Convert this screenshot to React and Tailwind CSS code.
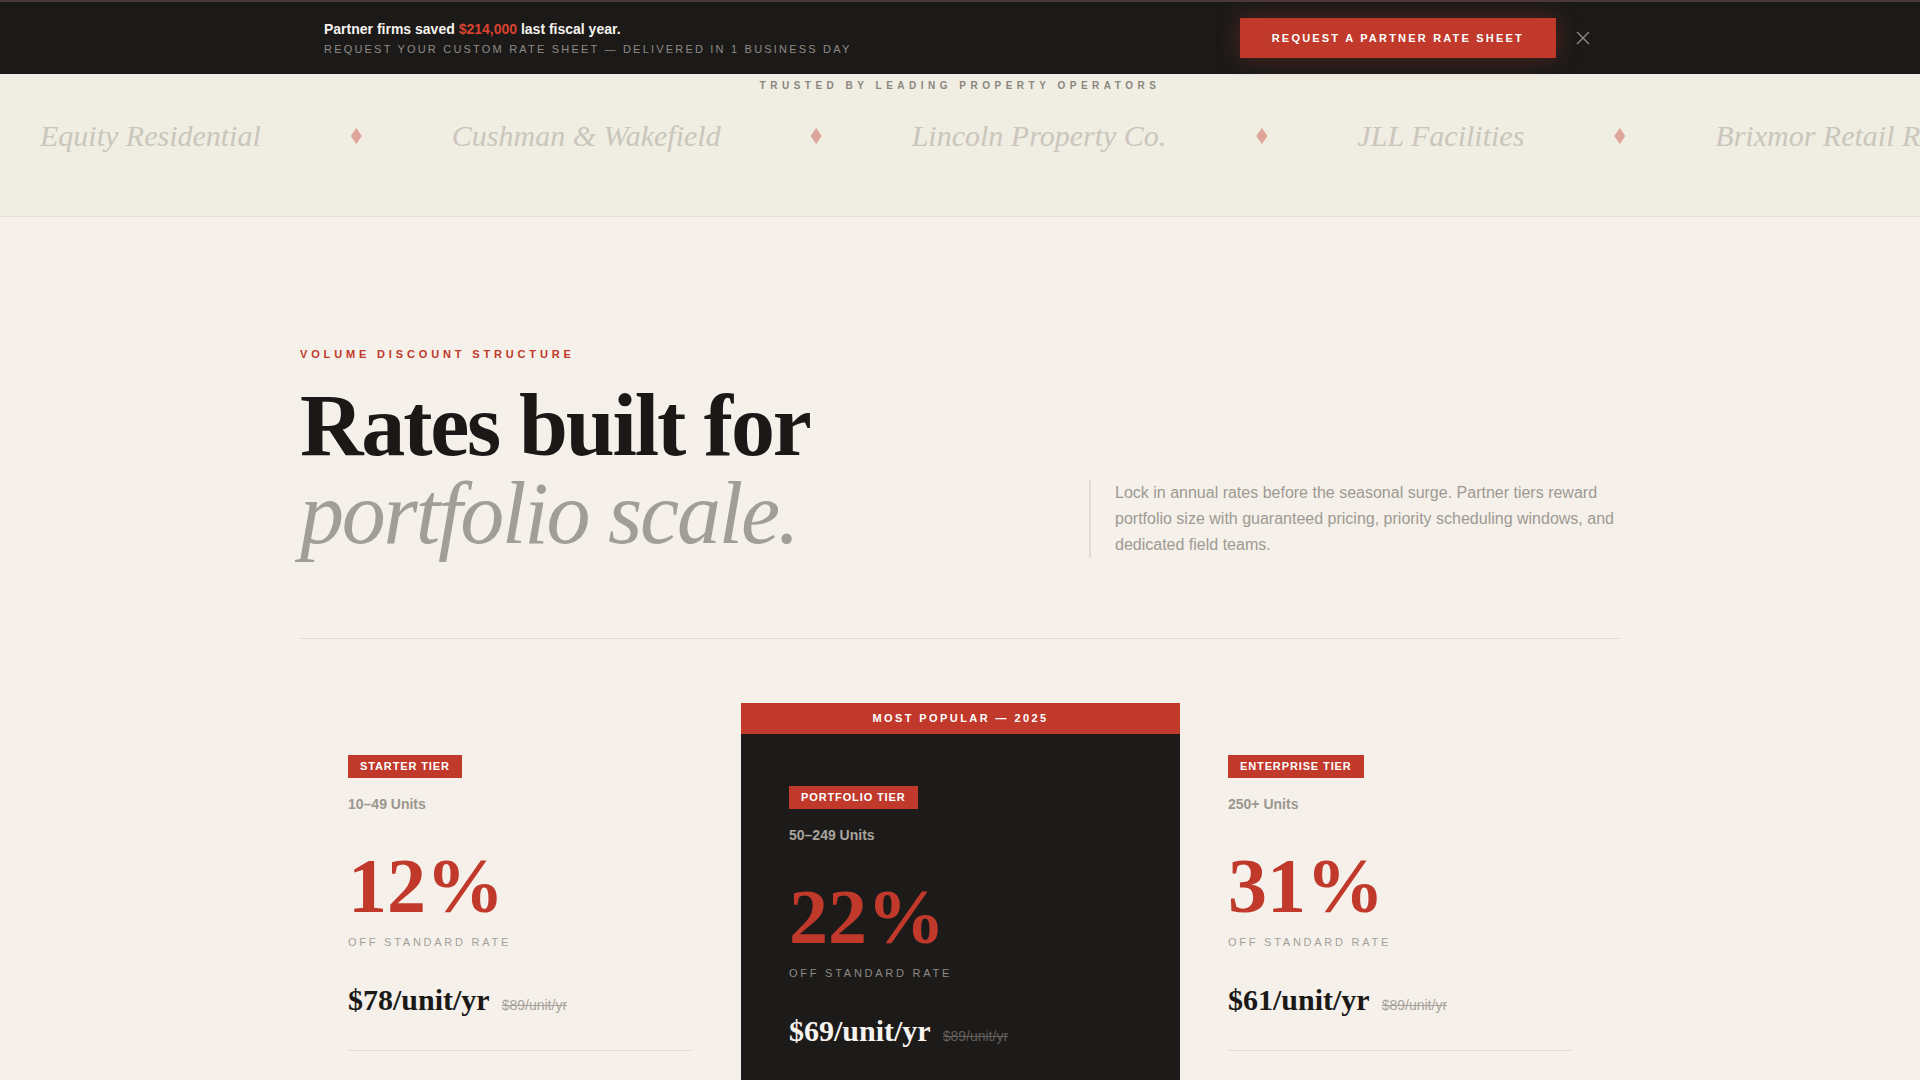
import { useState } from 'react'

const logos = [
  'Equity Residential',
  'Cushman & Wakefield',
  'Lincoln Property Co.',
  'JLL Facilities',
  'Brixmor Retail Realty',
  'Greystar Partners',
]

const tiers = [
  {
    name: 'Starter Tier',
    units: '10–49 Units',
    discount: '12%',
    price: '$78/unit/yr',
    features: ['Locked annual rate', 'Quarterly service visits', 'Standard scheduling'],
  },
  {
    name: 'Portfolio Tier',
    units: '50–249 Units',
    discount: '22%',
    price: '$69/unit/yr',
    featured: true,
    features: ['Guaranteed pricing', 'Priority scheduling windows', 'Dedicated account lead'],
  },
  {
    name: 'Enterprise Tier',
    units: '250+ Units',
    discount: '31%',
    price: '$61/unit/yr',
    features: ['Dedicated field teams', 'Custom SLA terms', 'Consolidated billing'],
  },
]

const CloseIcon = () => (
  <svg width="14" height="14" viewBox="0 0 14 14" fill="none" stroke="currentColor" strokeWidth="1.4">
    <path d="M1 1L13 13M13 1L1 13" />
  </svg>
)

const PromoBar = ({ onClose }) => (
  <div className="bg-[#1b1a19] border-t-2 border-[#4a393c]">
    <div className="max-w-[1320px] mx-auto pl-6 pr-[26px] h-[72px] flex items-center justify-between">
      <div>
        <p className="text-[14px] leading-5 font-bold text-[#f7f3ee]">
          Partner firms saved <span className="text-[#d9432f]">$214,000</span> last fiscal year.
        </p>
        <p className="mt-0.5 text-[11px] leading-4 tracking-[0.2em] uppercase text-[#8f8b85]">
          Request your custom rate sheet — delivered in 1 business day
        </p>
      </div>
      <div className="flex items-center gap-4">
        <button className="bg-[#c0392b] px-8 py-3 text-[11px] leading-4 font-bold tracking-[0.2em] uppercase text-white shadow-[0_0_22px_rgba(192,57,43,0.35)]">
          Request a Partner Rate Sheet
        </button>
        <button onClick={onClose} className="p-1 text-[#8f8b85]" title="Dismiss">
          <CloseIcon />
        </button>
      </div>
    </div>
  </div>
)

const Diamond = () => (
  <span className="w-[11px] h-[16px] shrink-0 bg-[#c0392b]/40 [clip-path:polygon(50%_0,100%_50%,50%_100%,0_50%)]" />
)

const LogoStrip = () => (
  <div className="bg-[#f0ede3] border-b border-[#e6e1d7] pt-[5px] pb-[62px]">
    <p className="text-center text-[10px] leading-[14px] font-semibold tracking-[0.45em] uppercase text-[#8a867f]">
      Trusted by leading property operators
    </p>
    <div className="mt-[25px] overflow-hidden">
      <div className="flex items-center gap-[90px] pl-10 whitespace-nowrap">
        {logos.map((logo, i) => (
          <div key={logo} className="flex items-center gap-[90px] shrink-0">
            {i > 0 && <Diamond />}
            <span className="font-['Liberation_Serif',serif] italic text-[30px] leading-9 text-[#cac6bc]">
              {logo}
            </span>
          </div>
        ))}
      </div>
    </div>
  </div>
)

const TierCard = ({ tier }) => {
  const dark = tier.featured
  return (
    <div className={dark ? 'bg-[#1c1b1a]' : ''}>
      {dark && (
        <div className="h-[31px] bg-[#c0392b] flex items-center justify-center text-[11px] font-bold tracking-[0.22em] uppercase text-white">
          Most Popular — 2025
        </div>
      )}
      <div className="px-12 pt-[50px] pb-12">
        <span className="inline-block bg-[#c0392b] px-3 py-1 text-[11px] leading-[15px] font-bold tracking-[0.08em] uppercase text-white">
          {tier.name}
        </span>
        <p className={`mt-4 text-sm leading-5 font-bold ${dark ? 'text-[#a8a49d]' : 'text-[#9b978f]'}`}>
          {tier.units}
        </p>
        <p className="mt-8 font-['Liberation_Serif',serif] font-bold text-[78px] leading-[80px] text-[#c0392b]">
          {tier.discount}
        </p>
        <p className={`mt-2 text-[11px] leading-4 tracking-[0.25em] uppercase ${dark ? 'text-[#8e8a84]' : 'text-[#a39f98]'}`}>
          Off standard rate
        </p>
        <div className="mt-8 flex items-baseline gap-3">
          <span className={`font-['Liberation_Serif',serif] font-bold text-[30px] leading-9 ${dark ? 'text-[#f7f3ee]' : 'text-[#1a1918]'}`}>
            {tier.price}
          </span>
          <span className={`text-sm line-through ${dark ? 'text-[#625e59]' : 'text-[#a8a49c]'}`}>
            $89/unit/yr
          </span>
        </div>
        <ul className={`mt-8 pt-10 border-t space-y-3 text-sm ${dark ? 'border-[#33312f] text-[#c9c5be]' : 'border-[#e4dfd6] text-[#55524d]'}`}>
          {tier.features.map((f) => (
            <li key={f}>{f}</li>
          ))}
        </ul>
      </div>
    </div>
  )
}

export default function App() {
  const [showBar, setShowBar] = useState(true)

  return (
    <div className="min-h-screen bg-[#f5f0e9] font-['Liberation_Sans',Arial,sans-serif]">
      {showBar && <PromoBar onClose={() => setShowBar(false)} />}
      <LogoStrip />

      <main className="max-w-[1320px] mx-auto pt-[129px] pb-24">
        {/* Section header */}
        <div className="flex items-end justify-between pb-20 border-b border-[#e2ddd5]">
          <div>
            <p className="text-[11px] leading-4 font-bold tracking-[0.35em] uppercase text-[#c0392b]">
              Volume Discount Structure
            </p>
            <h1 className="mt-5 font-['Liberation_Serif',serif] text-[88px] leading-none tracking-[-0.025em]">
              <span className="block font-bold text-[#1a1918]">Rates built for</span>
              <span className="block italic text-[#a19d97]">portfolio scale.</span>
            </h1>
          </div>
          <p className="w-[531px] border-l-2 border-[#e2dcd3] pl-6 text-base leading-[26px] text-[#9e9a93]">
            Lock in annual rates before the seasonal surge. Partner tiers reward portfolio size with
            guaranteed pricing, priority scheduling windows, and dedicated field teams.
          </p>
        </div>

        {/* Tier cards */}
        <div className="mt-16 grid grid-cols-[441px_439px_440px]">
          {tiers.map((tier) => (
            <TierCard key={tier.name} tier={tier} />
          ))}
        </div>
      </main>
    </div>
  )
}
